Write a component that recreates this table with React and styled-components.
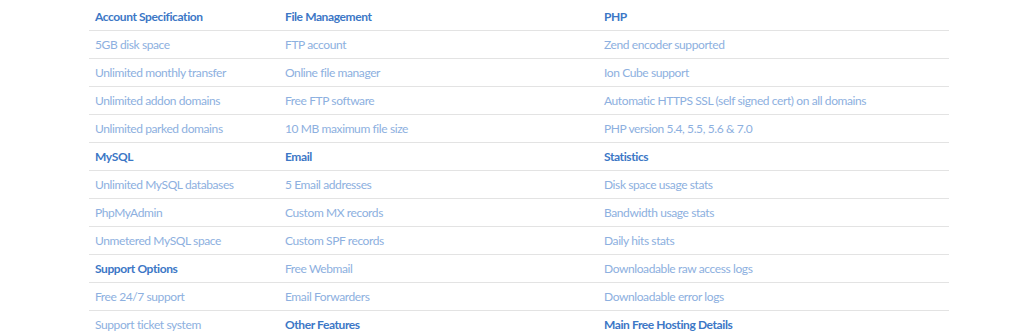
import React from "react";
import styled, { createGlobalStyle } from "styled-components";

const GlobalStyle = createGlobalStyle`
  body {
    margin: 0;
    background: #ffffff;
    font-family: Lato, "Open Sans", sans-serif;
  }
`;

const Wrapper = styled.div`
  padding: 3px 75px 0 89px;
`;

const Table = styled.div`
  display: grid;
  grid-template-columns: 190px 319px 1fr;
  width: 860px;
`;

const Cell = styled.div`
  height: 27px;
  line-height: 27px;
  padding: 0 6px;
  border-bottom: 1px solid #e3e3e3;
  font-size: 12px;
  letter-spacing: -0.4px;
  font-weight: ${(p) => (p.$head ? 700 : 400)};
  color: ${(p) => (p.$head ? "#3c77c6" : "#8db0e0")};
  white-space: nowrap;
`;

const rows = [
  [["Account Specification", 1], ["File Management", 1], ["PHP", 1]],
  ["5GB disk space", "FTP account", "Zend encoder supported"],
  ["Unlimited monthly transfer", "Online file manager", "Ion Cube support"],
  ["Unlimited addon domains", "Free FTP software", "Automatic HTTPS SSL (self signed cert) on all domains"],
  ["Unlimited parked domains", "10 MB maximum file size", "PHP version 5.4, 5.5, 5.6 & 7.0"],
  [["MySQL", 1], ["Email", 1], ["Statistics", 1]],
  ["Unlimited MySQL databases", "5 Email addresses", "Disk space usage stats"],
  ["PhpMyAdmin", "Custom MX records", "Bandwidth usage stats"],
  ["Unmetered MySQL space", "Custom SPF records", "Daily hits stats"],
  [["Support Options", 1], "Free Webmail", "Downloadable raw access logs"],
  ["Free 24/7 support", "Email Forwarders", "Downloadable error logs"],
  ["Support ticket system", ["Other Features", 1], ["Main Free Hosting Details", 1]],
];

export default function App() {
  return (
    <>
      <GlobalStyle />
      <Wrapper>
        <Table>
          {rows.map((row, i) =>
            row.map((c, j) => {
              const head = Array.isArray(c);
              return (
                <Cell key={`${i}-${j}`} $head={head}>
                  {head ? c[0] : c}
                </Cell>
              );
            })
          )}
        </Table>
      </Wrapper>
    </>
  );
}
